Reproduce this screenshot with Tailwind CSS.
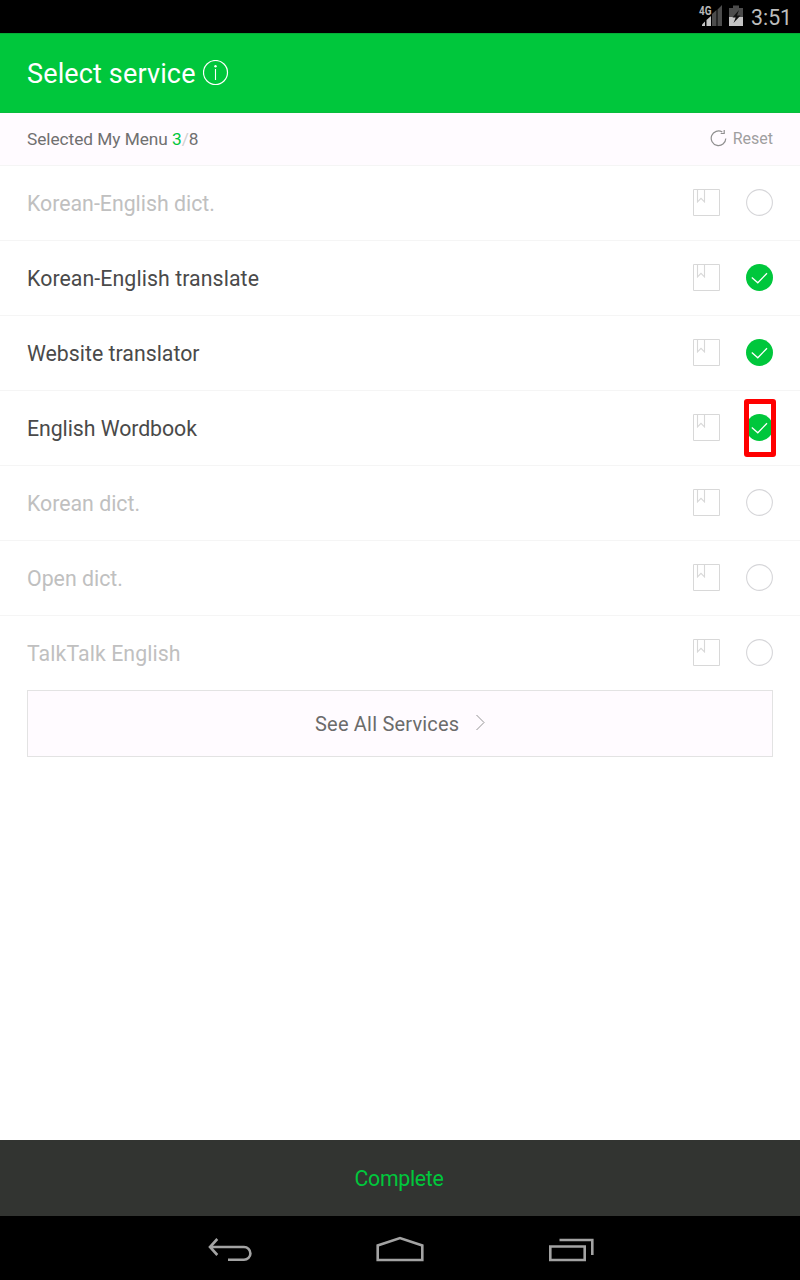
<!DOCTYPE html>
<html lang="en">
<head>
<meta charset="utf-8">
<title>Select service</title>
<script src="https://cdn.jsdelivr.net/npm/@tailwindcss/browser@4"></script>
</head>
<body class="bg-white">
<svg class="hidden">
  <symbol id="book" viewBox="0 0 27 27"><path d="M.5.5h26v26H.5z" fill="none" stroke="#d8d8d8"/><path d="M4.500.5V12.800L8 9.300l3.500 3.500V.5" fill="none" stroke="#d8d8d8" stroke-width="1.100"/></symbol>
  <symbol id="off" viewBox="0 0 27 27"><circle cx="13.500" cy="13.500" r="12.900" fill="none" stroke="#d6d6d9" stroke-width="1.100"/></symbol>
  <symbol id="on" viewBox="0 0 27 27"><circle cx="13.500" cy="13.500" r="13.500" fill="#00c73c"/><path d="M5.800 13.400l6 5.400L21 9.200" fill="none" stroke="#fff" stroke-width="1.300"/></symbol>
</svg>
<div class="flex h-[1280px] w-[800px] flex-col overflow-hidden bg-white font-['Roboto',sans-serif] whitespace-nowrap">
  <div class="flex h-[33px] shrink-0 bg-black pl-[698px]">
    <svg class="h-[33px] w-[46px] shrink-0" viewBox="698 0 46 33">
      <path d="M702 26v-1.500l3-3V26z" fill="#c4c4c4"/><path d="M706.500 26v-6l4.500-4v10z" fill="#c4c4c4"/>
      <path d="M712 26V14l4.500-4v16zM717.500 26V9.500L722 5v21z" fill="#4c4c4c"/>
      <text x="699" y="15" font-size="12.500" font-weight="700" textLength="12.500" lengthAdjust="spacingAndGlyphs" fill="#b8b8b8">4G</text>
      <path d="M729 8h4V5.500h6V8h4v9h-14z" fill="#4c4c4c"/><path d="M729 17h14v9h-14z" fill="#c4c4c4"/>
      <path d="M739 10l-6.500 7.500h3.200l-2.200 5.500 7-7.500h-3.500z" fill="#111"/>
    </svg>
    <span class="ml-[7px] mt-[4px] text-[21.300px] leading-[28px] text-[#bdbdbd]">3:51</span>
  </div>
  <header class="flex h-[80px] shrink-0 border-t border-t-[#05ad38] border-b border-b-[#09bc3d] bg-[#00c73c] pl-[27px]">
    <h1 class="mt-[23px] w-[169px] text-[27px] leading-[34px] tracking-[0.140px] text-white">Select service</h1>
    <svg class="ml-[7px] mt-[26px] h-[26px] w-[26px]" viewBox="0 0 26 26"><circle cx="12.500" cy="12.500" r="12" fill="none" stroke="#fff" stroke-width="1.200"/><path d="M12.500 9v11" stroke="#fff" stroke-width="1.100"/><circle cx="12.500" cy="6.300" r="1.200" fill="#fff"/></svg>
  </header>
  <div class="flex h-[53px] shrink-0 justify-between border-b border-[#f5f5f5] bg-[#fffbff] px-[27px]">
    <p class="mt-[14px] text-[17.300px] leading-[24px] tracking-[-0.050px] text-[#707070]">Selected My Menu <span class="text-[#00c73c]">3</span><span class="text-[#d0d0d0]">/</span>8</p>
    <div class="flex">
      <svg class="mr-[5px] mt-[16px] h-[18px] w-[18px]" viewBox="0 0 18 18"><path d="M12.300 3A7.300 7.300 0 1 0 15.800 9.500M14.200 1v3.500H10.700" fill="none" stroke="#8f8f8f" stroke-width="1.200"/></svg>
      <span class="mt-[14px] text-[16px] leading-[24px] text-[#9f9f9f]">Reset</span>
    </div>
  </div>
  <ul class="shrink-0 text-[21.300px] leading-[30px] text-[#c0c0c0]">
    <li class="flex h-[75px] border-b border-[#f5f5f5] px-[27px] pt-[23px]"><span class="grow">Korean-English dict.</span><svg class="mr-[26px] size-[27px]"><use href="#book"/></svg><svg class="size-[27px]"><use href="#off"/></svg></li>
    <li class="flex h-[75px] border-b border-[#f5f5f5] px-[27px] pt-[23px]"><span class="grow tracking-[0.080px] text-[#4a4a4a]">Korean-English translate</span><svg class="mr-[26px] size-[27px]"><use href="#book"/></svg><svg class="size-[27px]"><use href="#on"/></svg></li>
    <li class="flex h-[75px] border-b border-[#f5f5f5] px-[27px] pt-[23px]"><span class="grow text-[#4a4a4a]">Website translator</span><svg class="mr-[26px] size-[27px]"><use href="#book"/></svg><svg class="size-[27px]"><use href="#on"/></svg></li>
    <li class="relative flex h-[75px] border-b border-[#f5f5f5] px-[27px] pt-[23px]"><span class="grow tracking-[-0.070px] text-[#4a4a4a]">English Wordbook</span><svg class="mr-[26px] size-[27px]"><use href="#book"/></svg><svg class="size-[27px]"><use href="#on"/></svg>
      <div class="absolute top-[8px] right-[24px] h-[58px] w-[32px] rounded-[3px] border-[5px] border-[#ff0000]"></div></li>
    <li class="flex h-[75px] border-b border-[#f5f5f5] px-[27px] pt-[23px]"><span class="grow">Korean dict.</span><svg class="mr-[26px] size-[27px]"><use href="#book"/></svg><svg class="size-[27px]"><use href="#off"/></svg></li>
    <li class="flex h-[75px] border-b border-[#f5f5f5] px-[27px] pt-[23px]"><span class="grow">Open dict.</span><svg class="mr-[26px] size-[27px]"><use href="#book"/></svg><svg class="size-[27px]"><use href="#off"/></svg></li>
    <li class="flex h-[74px] px-[27px] pt-[23px]"><span class="grow tracking-[0.080px]">TalkTalk English</span><svg class="mr-[26px] size-[27px]"><use href="#book"/></svg><svg class="size-[27px]"><use href="#off"/></svg></li>
  </ul>
  <div class="mx-[27px] flex h-[67px] shrink-0 border border-[#e3e3e3] bg-[#fffbff] pl-[287px]">
    <span class="mt-[18px] w-[145px] text-[20px] leading-[30px] tracking-[0.200px] text-[#6b6b6b]">See All Services</span>
    <svg class="ml-[15px] mt-[23px] h-[18px] w-[12px]" viewBox="0 0 12 18"><path d="M1.500 1l7.500 7.500-7.500 7.500" fill="none" stroke="#888" stroke-width=".9"/></svg>
  </div>
  <div class="grow"></div>
  <div class="flex h-[76px] shrink-0 justify-center bg-[#323431] pr-[2px]"><span class="mt-[24px] text-[21.300px] leading-[30px] tracking-[-0.300px] text-[#00c73c]">Complete</span></div>
  <nav class="h-[64px] shrink-0 bg-black">
    <svg class="h-[64px] w-[800px]" viewBox="0 1216 800 64" fill="none" stroke="#a3a3a3" stroke-width="2.600">
      <path d="M210 1247h34a6.200 6.200 0 0 1 0 12.800H228M217.300 1239l-7.300 8 7.300 8"/>
      <path d="M377.700 1260V1245.500L400 1238l22.300 7.500V1260z"/>
      <path d="M550.300 1246.500h34.400v13.500h-34.400zM559.500 1240h32.800v15"/>
    </svg>
  </nav>
</div>
</body>
</html>
